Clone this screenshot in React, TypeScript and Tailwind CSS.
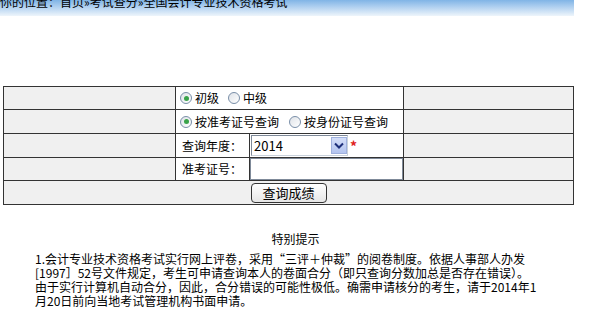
const Radio = ({ checked }: { checked?: boolean }) => (
  <span className="relative inline-flex h-[12px] w-[12px] shrink-0 items-center justify-center rounded-full border border-[#7a8fa8] bg-gradient-to-br from-[#dfe3e8] to-white">
    {checked && <span className="h-[5px] w-[5px] rounded-full bg-[#3aa34a]" />}
  </span>
);

const App = () => {
  return (
    <div className="min-h-[325px] w-[591px] bg-white text-[12px] text-black [font-family:'Noto_Sans_CJK_SC',sans-serif]">
      <div className="h-[16px] w-[574px] overflow-hidden bg-gradient-to-b from-[#80b4e6] to-[#eef5fb]">
        <div className="-mt-[6px] whitespace-nowrap leading-[16px]">你的位置：首页»考试查分»全国会计专业技术资格考试</div>
      </div>

      <table className="ml-[3px] mt-[70px] w-[570px] table-fixed border-collapse">
        <colgroup>
          <col className="w-[172px]" />
          <col className="w-[74px]" />
          <col className="w-[154px]" />
          <col className="w-[170px]" />
        </colgroup>
        <tbody>
          <tr className="h-[23px]">
            <td className="border border-[#333] bg-[#f0f0f0]" />
            <td colSpan={2} className="border border-[#333] bg-white px-[4px]">
              <div className="flex items-center whitespace-nowrap leading-[14px]">
                <Radio checked />
                <span className="ml-[3px]">初级</span>
                <span className="ml-[9px] flex"><Radio /></span>
                <span className="ml-[3px]">中级</span>
              </div>
            </td>
            <td className="border border-[#333] bg-[#f0f0f0]" />
          </tr>
          <tr className="h-[24px]">
            <td className="border border-[#333] bg-[#f0f0f0]" />
            <td colSpan={2} className="border border-[#333] bg-white px-[4px]">
              <div className="flex items-center whitespace-nowrap text-[12px] leading-[14px]">
                <Radio checked />
                <span className="ml-[3px]">按准考证号查询</span>
                <span className="ml-[10px] flex"><Radio /></span>
                <span className="ml-[3px]">按身份证号查询</span>
              </div>
            </td>
            <td className="border border-[#333] bg-[#f0f0f0]" />
          </tr>
          <tr className="h-[24px]">
            <td className="border border-[#333] bg-[#f0f0f0]" />
            <td className="whitespace-nowrap border border-[#333] bg-white pl-[6px] leading-[14px]">查询年度：</td>
            <td className="border border-[#333] bg-white px-[1px]">
              <div className="flex items-center">
                <div className="flex h-[21px] w-[97px] items-center border border-[#7f8a99] border-r-[#c9d2dc] border-b-[#c9d2dc] bg-white">
                  <span className="flex-1 pl-[2px] text-[13px] leading-[14px]">2014</span>
                  <span className="flex h-[17px] w-[16px] items-center justify-center border border-[#9fb1de] bg-gradient-to-b from-[#d4def8] to-[#b3c4ef]">
                    <svg width="10" height="7" viewBox="0 0 10 7">
                      <path d="M1 1.5 L5 5.5 L9 1.5" fill="none" stroke="#1d2f7a" strokeWidth="2" />
                    </svg>
                  </span>
                </div>
                <span className="ml-[2px] text-[14px] font-bold leading-[14px] text-[#e02020]">*</span>
              </div>
            </td>
            <td className="border border-[#333] bg-[#f0f0f0]" />
          </tr>
          <tr className="h-[23px]">
            <td className="border border-[#333] bg-[#f0f0f0]" />
            <td className="whitespace-nowrap border border-[#333] bg-white pl-[6px] leading-[14px]">准考证号：</td>
            <td className="border border-[#333] bg-white p-0">
              <div className="h-[22px] w-full border border-[#7f8a99] bg-white" />
            </td>
            <td className="border border-[#333] bg-[#f0f0f0]" />
          </tr>
          <tr className="h-[24px]">
            <td colSpan={4} className="border border-[#333] bg-[#f0f0f0] text-center">
              <span className="inline-flex h-[20px] w-[76px] items-center justify-center rounded-[4px] border border-[#333] bg-gradient-to-b from-white to-[#e6e6e6] text-[13px] leading-[14px]">
                查询成绩
              </span>
            </td>
          </tr>
        </tbody>
      </table>

      <div className="mt-[27px] text-center leading-[14px]">特别提示</div>
      <div className="ml-[35px] mt-[6px] whitespace-nowrap leading-[14px]">
        <div>1.会计专业技术资格考试实行网上评卷，采用“三评＋仲裁”的阅卷制度。依据人事部人办发</div>
        <div>[1997］52号文件规定，考生可申请查询本人的卷面合分（即只查询分数加总是否存在错误）。</div>
        <div>由于实行计算机自动合分，因此，合分错误的可能性极低。确需申请核分的考生，请于2014年1</div>
        <div>月20日前向当地考试管理机构书面申请。</div>
      </div>
    </div>
  );
};

export default App;
